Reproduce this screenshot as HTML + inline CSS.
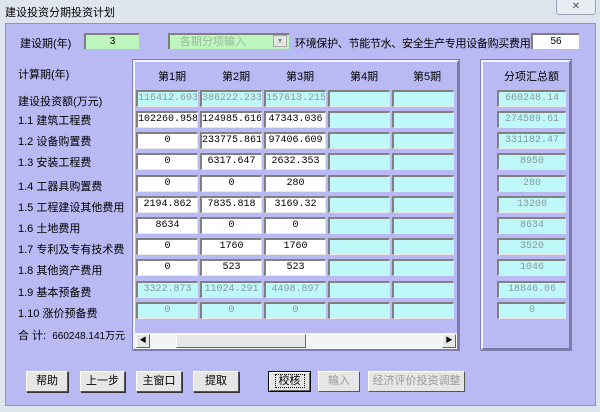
<!DOCTYPE html>
<html><head><meta charset="utf-8"><style>
*{margin:0;padding:0;box-sizing:border-box}
body{width:600px;height:412px;background:#dfe5ee;font-family:"Liberation Sans","Noto Sans CJK SC",sans-serif;font-size:11px;color:#000;position:relative;overflow:hidden}
.a{position:absolute;white-space:nowrap}
.panel{position:absolute;left:5px;top:23px;width:591px;height:383px;background:#b9b9f3;border:1px solid #8f97b0}
.inp{position:absolute;height:17px;width:62px;background:#fff;border-top:2px solid #808080;border-left:2px solid #808080;border-bottom:1px solid #e8e8e8;border-right:1px solid #e8e8e8;font-size:10px;text-align:center;line-height:14px;font-family:"Liberation Mono","Noto Sans CJK SC",monospace;overflow:hidden;white-space:nowrap}
.c{background:#bff8f8;color:#8a9a9a}
.frame{position:absolute;border:2px solid;border-color:#f0f0ff #7a7aa8 #7a7aa8 #f0f0ff;outline:1px solid #8080b0}
.btn{position:absolute;top:371px;height:21px;background:#e6e6e6;border:1px solid;border-color:#fff #555 #555 #fff;box-shadow:1px 1px 0 #333;text-align:center;line-height:19px;font-size:11px;white-space:nowrap;overflow:hidden}
.lbl{position:absolute;left:18px;font-size:11px;white-space:nowrap}
</style></head><body>
<div class="a" style="left:5px;top:4px;font-size:11px">建设投资分期投资计划</div>
<div class="a" style="left:556px;top:0;width:40px;height:15px;border:1px solid #9aa3b5;border-top:none;border-radius:0 0 3px 3px;background:#e8edf4;text-align:center;font-size:10px;line-height:14px;color:#555">✕</div>
<div class="panel"></div>
<div class="a" style="left:20px;top:35px">建设期(年)</div>
<div class="a" style="left:84px;top:33px;width:55px;height:16px;background:#bdf7bd;border-top:2px solid #808080;border-left:2px solid #808080;text-align:center;font-size:10px;line-height:14px">3</div>
<div class="a" style="left:168px;top:33px;width:121px;height:16px;background:#bdf7bd;border-top:2px solid #808080;border-left:2px solid #808080;color:#9ab89a;padding-left:10px;line-height:14px">各期分项输入</div>
<div class="a" style="left:273px;top:35px;width:14px;height:12px;background:#e4e4e4;border:1px solid #aaa;font-size:7px;text-align:center;line-height:11px;color:#888">▼</div>
<div class="a" style="left:295px;top:35px;letter-spacing:-0.3px">环境保护、节能节水、安全生产专用设备购买费用</div>
<div class="a" style="left:531px;top:33px;width:48px;height:16px;background:#fff;border-top:2px solid #808080;border-left:2px solid #808080;text-align:center;font-size:10px;line-height:14px">56</div>
<div class="lbl" style="top:66px">计算期(年)</div>
<div class="frame" style="left:133px;top:60px;width:326px;height:290px"></div>
<div class="frame" style="left:481px;top:60px;width:90px;height:290px"></div>
<div class="a" style="left:158px;top:68px">第1期</div>
<div class="a" style="left:222px;top:68px">第2期</div>
<div class="a" style="left:286px;top:68px">第3期</div>
<div class="a" style="left:350px;top:68px">第4期</div>
<div class="a" style="left:413px;top:68px">第5期</div>
<div class="a" style="left:504px;top:68px">分项汇总额</div>

<div class="lbl" style="top:93px">建设投资额(万元)</div>
<div class="lbl" style="top:112px">1.1 建筑工程费</div>
<div class="lbl" style="top:133px">1.2 设备购置费</div>
<div class="lbl" style="top:154px">1.3 安装工程费</div>
<div class="lbl" style="top:178px">1.4 工器具购置费</div>
<div class="lbl" style="top:199px">1.5 工程建设其他费用</div>
<div class="lbl" style="top:220px">1.6 土地费用</div>
<div class="lbl" style="top:241px">1.7 专利及专有技术费</div>
<div class="lbl" style="top:262px">1.8 其他资产费用</div>
<div class="lbl" style="top:284px">1.9 基本预备费</div>
<div class="lbl" style="top:305px">1.10 涨价预备费</div>
<div class="lbl" style="top:327px">合 计:&nbsp; <span style="font-size:10px">660248.141万元</span></div>

<div class="inp c" style="left:136px;top:90px">116412.693</div><div class="inp c" style="left:200px;top:90px">386222.233</div><div class="inp c" style="left:264px;top:90px">157613.215</div><div class="inp c" style="left:328px;top:90px"></div><div class="inp c" style="left:392px;top:90px"></div><div class="inp c" style="left:497px;top:90px;width:69px">660248.14</div>
<div class="inp" style="left:136px;top:111px">102260.958</div><div class="inp" style="left:200px;top:111px">124985.616</div><div class="inp" style="left:264px;top:111px">47343.036</div><div class="inp c" style="left:328px;top:111px"></div><div class="inp c" style="left:392px;top:111px"></div><div class="inp c" style="left:497px;top:111px;width:69px">274589.61</div>
<div class="inp" style="left:136px;top:132px">0</div><div class="inp" style="left:200px;top:132px">233775.861</div><div class="inp" style="left:264px;top:132px">97406.609</div><div class="inp c" style="left:328px;top:132px"></div><div class="inp c" style="left:392px;top:132px"></div><div class="inp c" style="left:497px;top:132px;width:69px">331182.47</div>
<div class="inp" style="left:136px;top:153px">0</div><div class="inp" style="left:200px;top:153px">6317.647</div><div class="inp" style="left:264px;top:153px">2632.353</div><div class="inp c" style="left:328px;top:153px"></div><div class="inp c" style="left:392px;top:153px"></div><div class="inp c" style="left:497px;top:153px;width:69px">8950</div>
<div class="inp" style="left:136px;top:175px">0</div><div class="inp" style="left:200px;top:175px">0</div><div class="inp" style="left:264px;top:175px">280</div><div class="inp c" style="left:328px;top:175px"></div><div class="inp c" style="left:392px;top:175px"></div><div class="inp c" style="left:497px;top:175px;width:69px">280</div>
<div class="inp" style="left:136px;top:196px">2194.862</div><div class="inp" style="left:200px;top:196px">7835.818</div><div class="inp" style="left:264px;top:196px">3169.32</div><div class="inp c" style="left:328px;top:196px"></div><div class="inp c" style="left:392px;top:196px"></div><div class="inp c" style="left:497px;top:196px;width:69px">13200</div>
<div class="inp" style="left:136px;top:217px">8634</div><div class="inp" style="left:200px;top:217px">0</div><div class="inp" style="left:264px;top:217px">0</div><div class="inp c" style="left:328px;top:217px"></div><div class="inp c" style="left:392px;top:217px"></div><div class="inp c" style="left:497px;top:217px;width:69px">8634</div>
<div class="inp" style="left:136px;top:238px">0</div><div class="inp" style="left:200px;top:238px">1760</div><div class="inp" style="left:264px;top:238px">1760</div><div class="inp c" style="left:328px;top:238px"></div><div class="inp c" style="left:392px;top:238px"></div><div class="inp c" style="left:497px;top:238px;width:69px">3520</div>
<div class="inp" style="left:136px;top:259px">0</div><div class="inp" style="left:200px;top:259px">523</div><div class="inp" style="left:264px;top:259px">523</div><div class="inp c" style="left:328px;top:259px"></div><div class="inp c" style="left:392px;top:259px"></div><div class="inp c" style="left:497px;top:259px;width:69px">1046</div>
<div class="inp c" style="left:136px;top:281px">3322.873</div><div class="inp c" style="left:200px;top:281px">11024.291</div><div class="inp c" style="left:264px;top:281px">4498.897</div><div class="inp c" style="left:328px;top:281px"></div><div class="inp c" style="left:392px;top:281px"></div><div class="inp c" style="left:497px;top:281px;width:69px">18846.06</div>
<div class="inp c" style="left:136px;top:302px">0</div><div class="inp c" style="left:200px;top:302px">0</div><div class="inp c" style="left:264px;top:302px">0</div><div class="inp c" style="left:328px;top:302px"></div><div class="inp c" style="left:392px;top:302px"></div><div class="inp c" style="left:497px;top:302px;width:69px">0</div>

<div class="a" style="left:135px;top:320px;width:322px;height:14px;background:#b9b9f3"></div>
<div class="a" style="left:135px;top:333px;width:322px;height:16px;background:#f4f4f4"></div>
<div class="a" style="left:136px;top:334px;width:14px;height:14px;background:#e6e6e6;border:1px solid;border-color:#fff #666 #666 #fff;font-size:7px;text-align:center;line-height:12px">◀</div>
<div class="a" style="left:442px;top:334px;width:14px;height:14px;background:#e6e6e6;border:1px solid;border-color:#fff #666 #666 #fff;font-size:7px;text-align:center;line-height:12px">▶</div>
<div class="a" style="left:176px;top:334px;width:130px;height:14px;background:#e6e6e6;border:1px solid;border-color:#fff #666 #666 #fff"></div>

<div class="btn" style="left:26px;width:42px">帮助</div>
<div class="btn" style="left:80px;width:45px">上一步</div>
<div class="btn" style="left:136px;width:46px">主窗口</div>
<div class="btn" style="left:193px;width:46px">提取</div>
<div class="btn" style="left:268px;width:43px;border:1px solid #000;box-shadow:inset 1px 1px 0 #fff,inset -1px -1px 0 #666"><span style="border:1px dotted #000;padding:0 3px">校核</span></div>
<div class="btn" style="left:318px;width:42px;color:#9a9a9a;box-shadow:none">输入</div>
<div class="btn" style="left:368px;width:97px;color:#9a9a9a;box-shadow:none">经济评价投资调整</div>
</body></html>
